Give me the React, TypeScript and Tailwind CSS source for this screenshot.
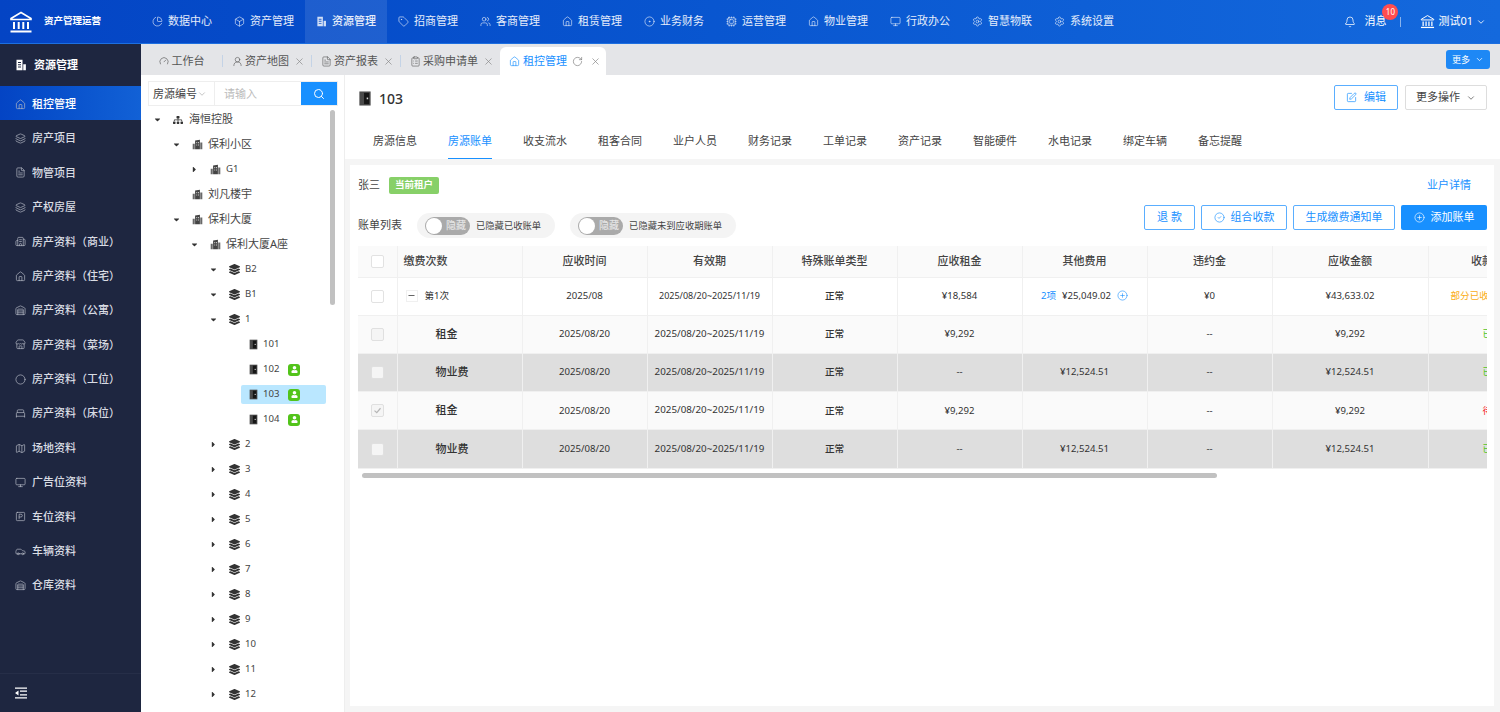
import {
  Bell, Box, Car, ChevronDown, Circle, CircleCheck, CirclePlus, Cpu, Gauge, House, Layers, Minus, Monitor,
  PieChart, RotateCw, Search, Settings, SquarePen, Tag, UserRound, Users, Warehouse, X, BedSingle, Store, CircleDot, Map, ClipboardList, FileText, Building2, Home, SquareParking,
} from 'lucide-react'
import { FaLayerGroup, FaSitemap, FaCaretDown, FaCaretRight, FaUser } from 'react-icons/fa'

const font = { fontFamily: '"Noto Sans", "Noto Sans CJK SC", sans-serif' }

function BankIcon({ className }: { className?: string }) {
  return (
    <svg viewBox="0 0 24 24" className={className} fill="none" stroke="currentColor" strokeWidth="1.6">
      <path d="M2 8.5 12 2.5l10 6v1H2z" />
      <path d="M5 12v7M9.7 12v7M14.3 12v7M19 12v7" strokeWidth="2" />
      <path d="M1.5 21.5h21" strokeWidth="2" />
    </svg>
  )
}

function DocIcon({ className }: { className?: string }) {
  return (
    <svg viewBox="0 0 16 16" className={className} fill="currentColor">
      <path d="M2 1h8v14H2zM4 4v1.3h4V4zm0 3v1.3h4V7zm0 3v1.3h4V10z" fillRule="evenodd" />
      <path d="M11 7h3.5v8H11z" />
    </svg>
  )
}

function BuildingIcon({ className }: { className?: string }) {
  return (
    <svg viewBox="0 0 16 16" className={className} fill="currentColor">
      <path d="M1 7h3v8H1zM12 5h3v10h-3z" opacity=".8" />
      <path d="M4.5 2 11.5 1v14h-7z" />
      <path d="M6.5 4.5h1v1.5h-1zM9 4.5h1v1.5H9zM6.5 8h1v1.5h-1zM9 8h1v1.5H9z" fill="#fff" />
    </svg>
  )
}

function DoorIcon({ className }: { className?: string }) {
  return (
    <svg viewBox="0 0 14 16" className={className}>
      <path d="M1 0.5h12v15H1z" fill="#4a4a4a" />
      <path d="M6 2h5.5v12H6z" fill="#161616" />
      <rect x="8.8" y="7" width="1.6" height="1.8" fill="#ddd" />
    </svg>
  )
}

function CollapseIcon({ className }: { className?: string }) {
  return (
    <svg viewBox="0 0 12 12" className={className} fill="currentColor">
      <path d="M0 0.5h12v1.2H0zM5 3.6h7v1.2H5zM5 7.2h7v1.2H5zM0 10.3h12v1.2H0zM3.5 3.5v5L0 6z" />
    </svg>
  )
}

const navs = [
  { label: '数据中心', icon: PieChart },
  { label: '资产管理', icon: Box },
  { label: '资源管理', icon: DocIcon, active: true },
  { label: '招商管理', icon: Tag },
  { label: '客商管理', icon: Users },
  { label: '租赁管理', icon: House },
  { label: '业务财务', icon: CircleDot },
  { label: '运营管理', icon: Cpu },
  { label: '物业管理', icon: Home },
  { label: '行政办公', icon: Monitor },
  { label: '智慧物联', icon: Settings },
  { label: '系统设置', icon: Settings },
]

const sideItems = [
  { label: '租控管理', icon: House, active: true },
  { label: '房产项目', icon: Layers },
  { label: '物管项目', icon: FileText },
  { label: '产权房屋', icon: Layers },
  { label: '房产资料（商业）', icon: Building2 },
  { label: '房产资料（住宅）', icon: Home },
  { label: '房产资料（公寓）', icon: Warehouse },
  { label: '房产资料（菜场）', icon: Store },
  { label: '房产资料（工位）', icon: Circle },
  { label: '房产资料（床位）', icon: BedSingle },
  { label: '场地资料', icon: Map },
  { label: '广告位资料', icon: Monitor },
  { label: '车位资料', icon: SquareParking },
  { label: '车辆资料', icon: Car },
  { label: '仓库资料', icon: Warehouse },
]

const tabs = ['房源信息', '房源账单', '收支流水', '租客合同', '业户人员', '财务记录', '工单记录', '资产记录', '智能硬件', '水电记录', '绑定车辆', '备忘提醒']

type TreeRow = { label: string; depth: number; caret?: 'down' | 'right'; kind: 'org' | 'building' | 'floor' | 'room'; tenant?: boolean; selected?: boolean }

const tree: TreeRow[] = [
  { label: '海恒控股', depth: 0, caret: 'down', kind: 'org' },
  { label: '保利小区', depth: 1, caret: 'down', kind: 'building' },
  { label: 'G1', depth: 2, caret: 'right', kind: 'building' },
  { label: '刘凡楼宇', depth: 1, kind: 'building' },
  { label: '保利大厦', depth: 1, caret: 'down', kind: 'building' },
  { label: '保利大厦A座', depth: 2, caret: 'down', kind: 'building' },
  { label: 'B2', depth: 3, caret: 'down', kind: 'floor' },
  { label: 'B1', depth: 3, caret: 'down', kind: 'floor' },
  { label: '1', depth: 3, caret: 'down', kind: 'floor' },
  { label: '101', depth: 4, kind: 'room' },
  { label: '102', depth: 4, kind: 'room', tenant: true },
  { label: '103', depth: 4, kind: 'room', tenant: true, selected: true },
  { label: '104', depth: 4, kind: 'room', tenant: true },
  ...['2', '3', '4', '5', '6', '7', '8', '9', '10', '11', '12'].map((label) => ({ label, depth: 3, caret: 'right' as const, kind: 'floor' as const })),
]

const indent = ['pl-[8px]', 'pl-[27px]', 'pl-[45px]', 'pl-[64px]', 'pl-[84px]']

function TreeNode({ row }: { row: TreeRow }) {
  const numeric = row.kind === 'floor' || row.kind === 'room' || row.label === 'G1'
  return (
    <div className={`flex h-[25px] items-center ${indent[row.depth]}`}>
      <span className="flex w-[16px] shrink-0 items-center justify-center text-[#333]">
        {row.caret === 'down' && <FaCaretDown className="h-[9px] w-[9px]" />}
        {row.caret === 'right' && <FaCaretRight className="h-[9px] w-[9px]" />}
      </span>
      <span className={`flex h-[19px] items-center rounded-[2px] pl-[8px] ${row.selected ? 'w-[85px] bg-[#bae7ff]' : ''}`}>
        {row.kind === 'org' && <FaSitemap className="mr-[6px] h-[10px] w-[10px] text-[#333]" />}
        {row.kind === 'building' && <BuildingIcon className="mr-[5px] h-[11px] w-[11px] text-[#444]" />}
        {row.kind === 'floor' && <FaLayerGroup className="mr-[5px] h-[11px] w-[11px] text-[#333]" />}
        {row.kind === 'room' && <DoorIcon className="mr-[5px] h-[11px] w-[9px]" />}
        <span className={`text-[#444] ${numeric ? 'text-[9.6px]' : 'text-[11px]'}`}>{row.label}</span>
        {row.tenant && (
          <span className="ml-[9px] flex h-[12px] w-[12px] items-center justify-center rounded-[3px] bg-[#52c41a]">
            <FaUser className="h-[7px] w-[7px] text-white" />
          </span>
        )}
      </span>
    </div>
  )
}

function Check({ state }: { state?: 'disabled' | 'checked' }) {
  const look = state ? 'border-[#e0e0e0] bg-[#f5f5f5]' : 'border-[#e2e2e2] bg-white'
  return (
    <span className={`mx-auto flex h-[13px] w-[13px] items-center justify-center rounded-[2px] border ${look}`}>
      {state === 'checked' && (
        <svg viewBox="0 0 12 12" className="h-[9px] w-[9px]" fill="none" stroke="#b5b5b5" strokeWidth="1.6">
          <path d="M2 6.2 5 9l5-6" />
        </svg>
      )}
    </span>
  )
}

type Row = { name: string; time: string; rent: string; other: string; fine: string; total: string; status: string; statusCls: string; dark?: boolean; check?: 'disabled' | 'checked' }

const rows: Row[] = [
  { name: '租金', time: '2025/08/20', rent: '¥9,292', other: '', fine: '--', total: '¥9,292', status: '已收款', statusCls: 'text-[#52c41a]', check: 'disabled' },
  { name: '物业费', time: '2025/08/20', rent: '--', other: '¥12,524.51', fine: '--', total: '¥12,524.51', status: '已收款', statusCls: 'text-[#52c41a]', dark: true, check: 'disabled' },
  { name: '租金', time: '2025/08/20', rent: '¥9,292', other: '', fine: '--', total: '¥9,292', status: '待收款', statusCls: 'text-[#f5222d]', check: 'checked' },
  { name: '物业费', time: '2025/08/20', rent: '--', other: '¥12,524.51', fine: '--', total: '¥12,524.51', status: '已收款', statusCls: 'text-[#52c41a]', dark: true, check: 'disabled' },
]

const heads = ['应收时间', '有效期', '特殊账单类型', '应收租金', '其他费用', '违约金', '应收金额', '收款状态']
const cell = 'border-r border-b border-[#f0f0f0] text-center'

function HideSwitch({ label }: { label: string }) {
  return (
    <div className="flex h-[25px] items-center rounded-full bg-[#f4f4f4] pl-[8px] pr-[14px] text-[9.3px] text-[#444]">
      <span className="mr-[6px] flex h-[18px] w-[45px] items-center rounded-full bg-[#aaaaaa] pl-[1px]">
        <span className="h-[16px] w-[16px] rounded-full bg-white" />
        <span className="ml-[4px] text-[10px] font-medium text-[#e4e4e4]">隐藏</span>
      </span>
      {label}
    </div>
  )
}

export default function App() {
  return (
    <div className="flex h-[712px] w-[1500px] flex-col overflow-hidden bg-white" style={font}>
      <header className="flex h-[44px] shrink-0 items-center border-b border-[#1d6fe0] bg-gradient-to-r from-[#0444c4] to-[#1469dd] text-white">
        <div className="flex w-[141px] shrink-0 items-center gap-[11px] pl-[9px]">
          <BankIcon className="h-[24px] w-[24px]" />
          <span className="text-[9.5px] font-bold">资产管理运营</span>
        </div>
        <nav className="flex h-full">
          {navs.map((n) => (
            <div key={n.label} className={`flex h-full w-[82px] items-center justify-center gap-[5px] ${n.active ? 'bg-white/10 font-medium' : ''}`}>
              <n.icon className="h-[11px] w-[11px] text-white/80" strokeWidth={1.5} />
              <span className="text-[11px] text-white/90">{n.label}</span>
            </div>
          ))}
        </nav>
        <div className="ml-auto flex items-center pr-[14px] text-[11px]">
          <Bell className="h-[12px] w-[12px]" strokeWidth={1.5} />
          <span className="relative ml-[8px]">
            消息
            <span className="absolute -top-[9px] left-[18px] flex h-[16px] w-[16px] items-center justify-center rounded-full bg-[#ff4d4f] text-[8px]">10</span>
          </span>
          <span className="ml-[14px] h-[10px] w-px bg-white/50" />
          <BankIcon className="ml-[19px] h-[15px] w-[15px]" />
          <span className="ml-[3px]">测试01</span>
          <ChevronDown className="ml-[3px] h-[10px] w-[10px]" />
        </div>
      </header>

      <div className="flex min-h-0 flex-1">
        <aside className="flex w-[141px] shrink-0 flex-col bg-[#1e2640] text-[#d9dce3]">
          <div className="flex h-[42px] shrink-0 items-center gap-[7px] pl-[15px] text-[11px] font-bold text-white">
            <DocIcon className="h-[12px] w-[12px]" />
            资源管理
          </div>
          {sideItems.map((s) => (
            <div key={s.label} className={`flex h-[34.4px] shrink-0 items-center gap-[6px] pl-[15px] pt-[2px] text-[11px] font-medium ${s.active ? 'bg-gradient-to-r from-[#0444c4] to-[#1261d6] text-white' : ''}`}>
              <s.icon className="h-[11px] w-[11px] text-[#b5b9c4]" strokeWidth={1.5} />
              {s.label}
            </div>
          ))}
          <div className="mt-auto flex h-[39px] items-center border-t border-[#262e48] pl-[15px]">
            <CollapseIcon className="h-[12px] w-[12px] text-white" />
          </div>
        </aside>

        <div className="flex min-w-0 flex-1 flex-col">
          <div className="flex h-[31px] shrink-0 items-end bg-[#e4e5e8] pl-[2px] text-[11px] text-[#555]">
            <div className="flex h-[28px] w-[79px] items-center justify-center gap-[3px] pr-[2px]">
              <Gauge className="h-[10px] w-[10px]" strokeWidth={1.5} />
              工作台
            </div>
            {[
              { t: '资产地图', i: UserRound, w: 'w-[89px]' },
              { t: '资产报表', i: FileText, w: 'w-[89px]' },
              { t: '采购申请单', i: ClipboardList, w: 'w-[100px]' },
            ].map((t) => (
              <div key={t.t} className={`flex h-[28px] ${t.w} items-center`}>
                <span className="h-[12px] w-px bg-[#c4d3e6]" />
                <t.i className="ml-[9px] mr-[2px] h-[11px] w-[11px]" strokeWidth={1.3} />
                {t.t}
                <X className="ml-[5px] h-[11px] w-[11px] text-[#888]" strokeWidth={1.5} />
              </div>
            ))}
            <div className="flex h-[28px] w-[106px] items-center rounded-t-[6px] bg-white pl-[9px] text-[#1890ff]">
              <House className="mr-[3px] h-[11px] w-[11px]" strokeWidth={1.4} />
              租控管理
              <RotateCw className="ml-[5px] h-[11px] w-[11px] text-[#777]" strokeWidth={1.4} />
              <X className="ml-[7px] h-[11px] w-[11px] text-[#888]" strokeWidth={1.5} />
            </div>
            <div className="mb-[6px] ml-auto mr-[10px] flex h-[19px] w-[44px] items-center justify-center gap-[5px] rounded-[3px] bg-[#1e88f5] text-[9px] text-white">
              更多
              <ChevronDown className="h-[9px] w-[9px]" />
            </div>
          </div>

          <div className="flex min-h-0 flex-1">
            <div className="relative w-[204px] shrink-0 overflow-hidden border-r border-[#eeeeee]">
              <div className="mb-[1px] ml-[7px] mr-[6px] mt-[6px] flex h-[25px] border border-[#eee] text-[11px]">
                <div className="flex w-[66px] items-center justify-between border-r border-[#eee] pl-[4px] pr-[7px] pt-[1px] text-[#444]">
                  房源编号
                  <ChevronDown className="h-[10px] w-[10px] text-[#bbb]" />
                </div>
                <div className="flex flex-1 items-center pl-[9px] pt-[1px] text-[#bbb]">请输入</div>
                <div className="flex w-[36px] items-center justify-center bg-[#1890ff] text-white">
                  <Search className="h-[12px] w-[12px]" strokeWidth={2} />
                </div>
              </div>
              <div>
                {tree.map((r, i) => (
                  <TreeNode key={i} row={r} />
                ))}
              </div>
              <div className="absolute left-[189px] top-[35px] h-[195px] w-[5px] rounded-full bg-[#c1c1c1]" />
            </div>

            <main className="flex min-w-0 flex-1 flex-col bg-[#f5f5f5]">
              <div className="bg-white pr-[13px]">
                <div className="flex h-[47px] items-center justify-between pl-[13px]">
                  <div className="flex items-center gap-[7px] text-[14px] font-medium text-[#333]">
                    <DoorIcon className="h-[15px] w-[14px]" />
                    103
                  </div>
                  <div className="-mt-[2px] flex gap-[7px] text-[11px]">
                    <div className="flex h-[25px] w-[64px] items-center justify-center gap-[7px] rounded-[2px] border border-[#5aaeff] text-[#1890ff]">
                      <SquarePen className="h-[11px] w-[11px]" strokeWidth={1.5} />
                      编辑
                    </div>
                    <div className="flex h-[25px] w-[82px] items-center justify-center gap-[6px] rounded-[2px] border border-[#ddd] text-[#444]">
                      更多操作
                      <ChevronDown className="h-[10px] w-[10px] text-[#666]" />
                    </div>
                  </div>
                </div>
                <div className="flex h-[37px] pl-[28px] text-[11px] text-[#444]">
                  {tabs.map((t, i) => (
                    <div key={t} className={`mr-[31px] flex h-full w-[44px] shrink-0 items-center justify-center pt-[2px] ${i === 1 ? 'border-b-[1.5px] border-[#1890ff] text-[#1890ff]' : ''}`}>
                      {t}
                    </div>
                  ))}
                </div>
              </div>

              <div className="mb-[6px] ml-[5px] mr-[6px] mt-[6px] min-h-0 flex-1 overflow-hidden bg-white pl-[8px]">
                <div className="flex h-[40px] items-center text-[11px] text-[#444]">
                  张三
                  <span className="ml-[9px] flex h-[17px] w-[50px] items-center justify-center rounded-[2px] bg-[#87d068] text-[9.5px] font-bold text-white">当前租户</span>
                  <span className="ml-auto mr-[23px] text-[#1890ff]">业户详情</span>
                </div>
                <div className="flex h-[41px] items-center pr-[7px]">
                  <span className="mr-[15px] text-[11px] text-[#444]">账单列表</span>
                  <HideSwitch label="已隐藏已收账单" />
                  <div className="w-[15px]" />
                  <HideSwitch label="已隐藏未到应收期账单" />
                  <div className="-mt-[16px] ml-auto flex gap-[6px] text-[11px] text-[#1890ff]">
                    <div className="flex h-[25px] w-[51px] items-center justify-center rounded-[2px] border border-[#5aaeff]">退 款</div>
                    <div className="flex h-[25px] w-[86px] items-center justify-center gap-[6px] rounded-[2px] border border-[#5aaeff]">
                      <CircleCheck className="h-[11px] w-[11px]" strokeWidth={1.4} />
                      组合收款
                    </div>
                    <div className="flex h-[25px] w-[102px] items-center justify-center rounded-[2px] border border-[#5aaeff]">生成缴费通知单</div>
                    <div className="flex h-[25px] w-[86px] items-center justify-center gap-[6px] rounded-[2px] bg-[#1890ff] text-white">
                      <CirclePlus className="h-[11px] w-[11px]" strokeWidth={1.4} />
                      添加账单
                    </div>
                  </div>
                </div>
                <div className="w-[1129px] overflow-hidden">
                  <table className="w-[1200px] table-fixed border-collapse text-[9.6px] text-[#333]">
                    <colgroup>
                      <col className="w-[39px]" />
                      <col className="w-[125px]" />
                      <col className="w-[125px]" />
                      <col className="w-[125px]" />
                      <col className="w-[125px]" />
                      <col className="w-[125px]" />
                      <col className="w-[125px]" />
                      <col className="w-[125px]" />
                      <col className="w-[156px]" />
                      <col className="w-[130px]" />
                    </colgroup>
                    <thead>
                      <tr className="h-[31px] bg-[#fafafa] text-[11px] font-medium text-[#444]">
                        <th className={cell}><Check /></th>
                        <th className={`${cell} pl-[6px] text-left font-medium`}>缴费次数</th>
                        {heads.map((h) => (
                          <th key={h} className={`${cell} font-medium`}>{h}</th>
                        ))}
                      </tr>
                    </thead>
                    <tbody>
                      <tr className="h-[38px] bg-white">
                        <td className={cell}><Check /></td>
                        <td className={`${cell} pl-[8px] text-left`}>
                          <span className="flex items-center gap-[7px]">
                            <span className="flex h-[12px] w-[12px] items-center justify-center border border-[#f0f0f0] bg-white">
                              <Minus className="h-[9px] w-[9px]" />
                            </span>
                            第1次
                          </span>
                        </td>
                        <td className={cell}>2025/08</td>
                        <td className={`${cell} text-[9px]`}>2025/08/20~2025/11/19</td>
                        <td className={`${cell} font-medium`}>正常</td>
                        <td className={cell}>¥18,584</td>
                        <td className={cell}>
                          <span className="flex items-center justify-center gap-[6px]">
                            <span className="text-[#1890ff]">2项</span>
                            ¥25,049.02
                            <CirclePlus className="h-[11px] w-[11px] text-[#1890ff]" strokeWidth={1.3} />
                          </span>
                        </td>
                        <td className={cell}>¥0</td>
                        <td className={cell}>¥43,633.02</td>
                        <td className={`${cell} text-left text-[#faad14]`}><span className="block whitespace-nowrap pl-[22px]">部分已收款</span></td>
                      </tr>
                      {rows.map((r, i) => (
                        <tr key={i} className={`h-[38.3px] ${r.dark ? 'bg-[#dedede]' : 'bg-[#fafafa]'}`}>
                          <td className={cell}><Check state={r.check} /></td>
                          <td className={`${cell} pl-[38px] text-left text-[11px] font-medium`}>{r.name}</td>
                          <td className={cell}>{r.time}</td>
                          <td className={`${cell} text-[9.8px]`}>2025/08/20~2025/11/19</td>
                          <td className={`${cell} font-medium`}>正常</td>
                          <td className={cell}>{r.rent}</td>
                          <td className={cell}>{r.other}</td>
                          <td className={cell}>{r.fine}</td>
                          <td className={cell}>{r.total}</td>
                          <td className={`${cell} text-left ${r.statusCls}`}><span className="block pl-[54px]">{r.status}</span></td>
                        </tr>
                      ))}
                    </tbody>
                  </table>
                </div>
                <div className="ml-[4px] mt-[4px] h-[5px] w-[855px] rounded-full bg-[#c1c1c1]" />
              </div>
            </main>
          </div>
        </div>
      </div>
    </div>
  )
}
